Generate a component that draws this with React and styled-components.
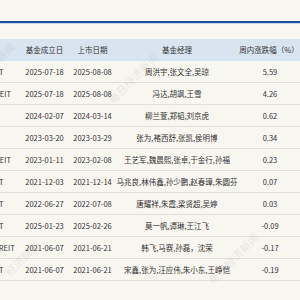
import styled, { createGlobalStyle } from "styled-components";

const GlobalStyle = createGlobalStyle`
  html, body {
    margin: 0;
    padding: 0;
    background: #f8f6f1;
  }
  body {
    font-family: "Noto Sans CJK SC", "Noto Sans", sans-serif;
    color: #333;
  }
`;

const Page = styled.div`
  position: relative;
  width: 300px;
  height: 300px;
  overflow: hidden;
  background: #f8f6f1;
  padding-top: 21px;
  box-sizing: border-box;
`;

const Rule = styled.div`
  height: 2px;
  background: #1f4f9a;
  border-bottom: 1px solid #c9d6ea;
  margin-bottom: 15px;
`;

const TableWrap = styled.div`
  overflow: hidden;
  width: 300px;
`;

const Table = styled.table`
  margin-left: -74px;
  border-collapse: collapse;
  table-layout: fixed;
  width: 374px;
  font-size: 7.5px;
  line-height: 1;
`;

const HeadRow = styled.tr`
  background: #d8e5f1;
`;

const Th = styled.th`
  height: 22px;
  padding: 0;
  font-weight: 400;
  text-align: center;
  color: #333;
  white-space: nowrap;
`;

const Tr = styled.tr`
  border-bottom: 1px solid #e2e0db;
`;

const Td = styled.td`
  height: 21px;
  padding: 0;
  text-align: center;
  white-space: nowrap;
  color: #333;
  padding-left: ${(p) => p.$shift || 0}px;
`;

const Mark = styled.div`
  position: absolute;
  left: ${(p) => p.$x}px;
  top: ${(p) => p.$y}px;
  transform: rotate(-45deg);
  font-size: 11px;
  font-weight: 700;
  color: rgba(120, 120, 120, 0.1);
  white-space: nowrap;
  pointer-events: none;
`;

const rows = [
  ["华夏凯德商业REIT", "2025-07-18", "2025-08-08", "周洪宇,张文全,吴琼", "5.59"],
  ["华夏华润有巢租赁REIT", "2025-07-18", "2025-08-08", "冯达,胡飒,王雪", "4.26"],
  ["嘉实物美REIT", "2024-02-07", "2024-03-14", "柳兰萱,郑韬,刘京虎", "0.62"],
  ["中金印力REIT", "2023-03-20", "2023-03-29", "张为,褚西舒,张凯,侯明博", "0.34"],
  ["华夏基金华润商业REIT", "2023-01-11", "2023-02-08", "王艺军,魏晨熙,张卓,于金行,孙福", "0.23"],
  ["国金中国铁建REIT", "2021-12-03", "2021-12-14", "马兆良,林伟鑫,孙少鹏,赵春璋,朱圆芬", "0.07"],
  ["华夏中国交建REIT", "2022-06-27", "2022-07-08", "唐耀祥,朱霞,梁贤超,吴婷", "0.03"],
  ["中金厦门安居REIT", "2025-01-23", "2025-02-26", "莫一帆,谭琳,王江飞", "-0.09"],
  ["博时招商蛇口产业园REIT", "2021-06-07", "2021-06-21", "韩飞,马赛,孙磊，沈荣", "-0.17"],
  ["平安广州广河REIT", "2021-06-07", "2021-06-21", "宋鑫,张为,汪应伟,朱小东,王峥恺", "-0.19"],
];

export default function App() {
  return (
    <>
      <GlobalStyle />
      <Page>
        <Rule />
        <TableWrap>
          <Table>
            <colgroup>
              <col style={{ width: 94 }} />
              <col style={{ width: 49 }} />
              <col style={{ width: 47 }} />
              <col style={{ width: 122 }} />
              <col style={{ width: 62 }} />
            </colgroup>
            <thead>
              <HeadRow>
                <Th>基金名称</Th>
                <Th>基金成立日</Th>
                <Th>上市日期</Th>
                <Th>基金经理</Th>
                <Th>周内涨跌幅（%）</Th>
              </HeadRow>
            </thead>
            <tbody>
              {rows.map((r) => (
                <Tr key={r[0] + r[1]}>
                  <Td>{r[0]}</Td>
                  <Td>{r[1]}</Td>
                  <Td>{r[2]}</Td>
                  <Td>{r[3]}</Td>
                  <Td $shift={2}>{r[4]}</Td>
                </Tr>
              ))}
            </tbody>
          </Table>
        </TableWrap>
        <Mark $x={-6} $y={44}>新闻</Mark>
        <Mark $x={100} $y={70}>每日经济新闻</Mark>
        <Mark $x={200} $y={250}>每日经济新闻</Mark>
        <Mark $x={0} $y={250}>经济新闻</Mark>
      </Page>
    </>
  );
}
